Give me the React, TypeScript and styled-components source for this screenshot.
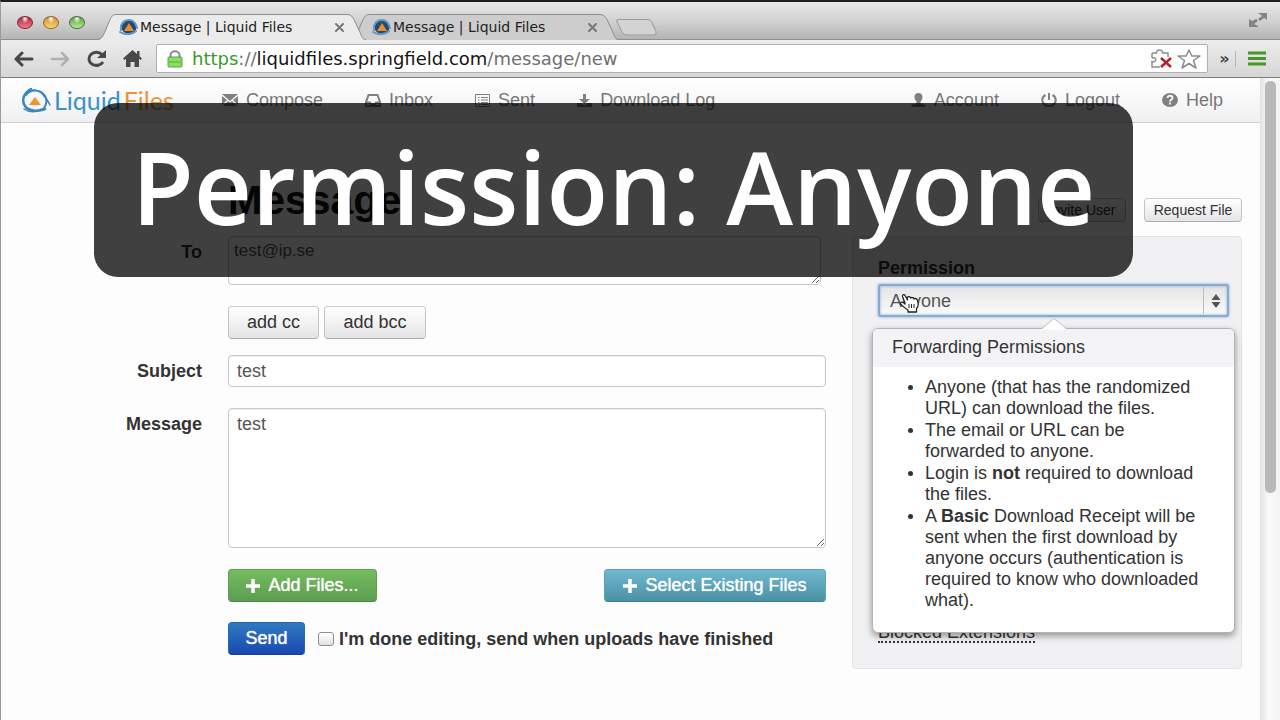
import React from "react";
import styled, { createGlobalStyle, css } from "styled-components";

const sans = `"Liberation Sans", Arial, sans-serif`;
const chromeFont = `"DejaVu Sans", "Noto Sans", sans-serif`;

const GlobalStyle = createGlobalStyle`
  *, *::before, *::after { box-sizing: border-box; }
  html, body { margin: 0; }
  body { background: #fdfdfd; color: #333; font: 18px/22px ${sans}; }
  button, input, textarea, select { font-family: inherit; font-size: inherit; color: inherit; margin: 0; }
  a { color: inherit; text-decoration: none; }
`;

/* ---------- Browser window ---------- */

const Window = styled.div`
  position: relative;
  display: flex;
  flex-direction: column;
  height: 100vh;
  overflow: hidden;
  border-top: 2px solid #231b24;
  border-left: 1px solid #9a9a9a;
`;

const TabStrip = styled.header`
  display: flex;
  align-items: flex-end;
  flex: none;
  height: 38px;
  padding: 0 12px 0 16px;
  background: linear-gradient(#e8e8e8, #d0d0d0 55%, #b4b4b4);
  border-bottom: 1px solid #8f8f8f;
`;

const Lights = styled.div`
  display: flex;
  gap: 10px;
  align-self: center;
  margin-top: 3px;
  width: 80px;
`;

const Light = styled.button<{ $from: string; $to: string; $edge: string }>`
  width: 16px;
  height: 13px;
  padding: 0;
  border: 1px solid ${(p) => p.$edge};
  border-radius: 50%;
  background: radial-gradient(ellipse at 50% 15%, #fff 0, transparent 35%),
    linear-gradient(${(p) => p.$from}, ${(p) => p.$to});
`;

const TabShell = styled.div<{ $active?: boolean }>`
  position: relative;
  z-index: ${(p) => (p.$active ? 2 : 1)};
  display: flex;
  align-items: center;
  width: 269px;
  height: 26px;
  margin-bottom: -1px;
  margin-right: -16px;
  padding: 0 22px;
  color: #222;
  font: 14px/18px ${chromeFont};
  svg { flex: none; }
`;

const TabShape = styled.svg`
  position: absolute;
  inset: 0;
  width: 100%;
  height: 100%;
`;

const TabIcon = styled.svg`
  position: relative;
`;

const TabTitle = styled.span`
  position: relative;
  flex: 1;
  margin-left: 1px;
  white-space: nowrap;
`;

const CloseTab = styled.button`
  position: relative;
  display: flex;
  padding: 0;
  border: 0;
  background: none;
`;

const NewTab = styled.button`
  padding: 0;
  border: 0;
  margin: 0 0 2px 12px;
  height: 19px;
  background: none;
  svg { display: block; }
`;

const FullScreen = styled.button`
  margin-left: auto;
  align-self: center;
  padding: 0;
  border: 0;
  background: none;
  height: 18px;
`;

const Toolbar = styled.div`
  display: flex;
  align-items: center;
  flex: none;
  height: 38px;
  padding: 0 12px;
  background: linear-gradient(#ececec, #d6d6d6);
  border-bottom: 1px solid #7c7c7c;
`;

const ToolButtons = styled.nav`
  display: flex;
  gap: 14px;
  width: 143px;
`;

const ToolButton = styled.button`
  display: flex;
  align-items: center;
  justify-content: center;
  width: 22px;
  height: 22px;
  padding: 0;
  border: 0;
  background: none;
  svg { flex: none; }
`;

const AddressBar = styled.div`
  display: flex;
  align-items: center;
  flex: 1;
  height: 29px;
  padding: 0 7px 0 10px;
  background: #fff;
  border: 1px solid #b0b0b0;
  border-radius: 2px;
  font: 18px/24px ${chromeFont};
  color: #707070;
  b { font-weight: 400; color: #141414; }
  i { font-style: normal; color: #3b9a29; }
`;

const AddressActions = styled.div`
  display: flex;
  gap: 6px;
`;

const Url = styled.span`
  flex: 1;
  margin-left: 9px;
  white-space: nowrap;
`;

const Chevrons = styled.button`
  width: 28px;
  margin-right: 10px;
  padding: 0 2px 0 8px;
  border: 0;
  border-right: 1px solid #b4b4b4;
  background: none;
  font: 700 16px/16px ${chromeFont};
  color: #444;
`;

/* ---------- Page viewport ---------- */

const Viewport = styled.div`
  display: flex;
  flex: 1;
  min-height: 0;
`;

const Page = styled.div`
  flex: 1;
  min-width: 0;
  overflow: hidden;
  background: #fdfdfd;
`;

const ScrollTrack = styled.div`
  width: 20px;
  padding: 3px 4px 0 4px;
  background: linear-gradient(90deg, #e6e6e8, #fafafa 40%, #f4f4f5);
  border-left: 1px solid #e2e2e2;
`;

const ScrollThumb = styled.div`
  height: 412px;
  border-radius: 5px;
  background: #b9b9bb;
`;

const NavBar = styled.nav`
  display: flex;
  align-items: center;
  height: 45px;
  padding: 0 37px 0 20px;
  background: linear-gradient(#fff, #f0f0f2);
  border-bottom: 1px solid #cfcfcf;
  color: #777;
`;

const Brand = styled.a`
  display: flex;
  align-items: center;
  width: 201px;
  color: #3a92c8;
  font: 25px/28px Lato, sans-serif;
  white-space: nowrap;
  span { margin-left: 3px; color: #e8963a; }
  svg { margin-right: 2px; }
`;

const NavGroup = styled.div<{ $end?: boolean }>`
  display: flex;
  gap: 42px;
  margin-left: ${(p) => (p.$end ? "auto" : "0")};
`;

const NavLink = styled.a`
  display: flex;
  align-items: center;
  gap: 8px;
  white-space: nowrap;
  line-height: 20px;
`;

const Content = styled.main`
  display: grid;
  grid-template-columns: minmax(0, 1fr) 390px;
  column-gap: 26px;
  padding: 58px 18px 0 20px;
`;

const FormColumn = styled.form`
  display: grid;
  grid-template-columns: 181px minmax(0, 1fr);
  column-gap: 26px;
  align-content: start;
`;

const Title = styled.h1`
  grid-column: 2;
  margin: 0 0 17px;
  color: #111;
  font: bold 41px/38px ${sans};
`;

const Label = styled.label`
  padding-top: 5px;
  text-align: right;
  font-weight: bold;
`;

const field = css`
  display: block;
  width: 100%;
  border: 1px solid #c8c8c8;
  border-radius: 4px;
  background: #fff;
  color: #555;
  line-height: 22px;
  box-shadow: inset 0 1px 1px rgba(0, 0, 0, 0.07);
`;

const Recipients = styled.textarea`
  ${field}
  && { font-size: 17px; }
  width: calc(100% - 5px);
  height: 49px;
  padding: 3px 5px;
  margin-bottom: 21px;
`;

const TextInput = styled.input`
  ${field}
  height: 32px;
  padding: 4px 8px;
  margin-bottom: 21px;
`;

const MessageBox = styled.textarea`
  ${field}
  height: 140px;
  padding: 4px 8px;
  margin-bottom: 21px;
`;

const Row = styled.div<{ $gap: number; $spread?: boolean; $bottom?: number }>`
  grid-column: 2;
  display: flex;
  align-items: center;
  justify-content: ${(p) => (p.$spread ? "space-between" : "flex-start")};
  gap: ${(p) => p.$gap}px;
  margin-bottom: ${(p) => p.$bottom ?? 0}px;
`;

const tones = {
  plain: css`
    color: #333;
    background: linear-gradient(#fff, #e4e4e6);
    border-color: #cccccc #c4c4c4 #aeaeae;
  `,
  green: css`
    color: #fff;
    background: linear-gradient(#74bd60, #5c9c50);
    border-color: #5fa050 #5fa050 #4f8745;
    text-shadow: 0 0 1px #fff;
  `,
  teal: css`
    color: #fff;
    background: linear-gradient(#70b9d0, #4a91a4);
    border-color: #5aa3b8 #5aa3b8 #41808f;
    text-shadow: 0 0 1px #fff;
  `,
  blue: css`
    color: #fff;
    background: linear-gradient(#2f7abf, #1a48b4);
    border-color: #2a68b0 #2a68b0 #1a3f98;
    text-shadow: 0 0 1px #fff;
  `,
};

const Button = styled.button<{ $tone: keyof typeof tones; $width: number; $small?: boolean }>`
  display: flex;
  align-items: center;
  justify-content: center;
  gap: 8px;
  width: ${(p) => p.$width}px;
  height: ${(p) => (p.$small ? 24 : 33)}px;
  padding: 0;
  border: 1px solid;
  border-radius: 4px;
  font-size: ${(p) => (p.$small ? 14 : 18)}px;
  white-space: nowrap;
  ${(p) => tones[p.$tone]}
`;

const DoneLabel = styled.label`
  display: flex;
  align-items: center;
  gap: 5px;
  font-weight: bold;
  white-space: nowrap;
`;

const Tick = styled.input`
  appearance: none;
  width: 16px;
  height: 14px;
  border: 1px solid #8e8e8e;
  border-radius: 3px;
  background: linear-gradient(#fff, #e2e2e2);
`;

const Side = styled.aside`
  display: flex;
  flex-direction: column;
`;

const SideActions = styled.div`
  display: flex;
  justify-content: flex-end;
  gap: 18px;
  padding: 17px 0 14px;
`;

const Well = styled.section`
  display: flex;
  flex-direction: column;
  height: 433px;
  padding: 20px 12px 25px 25px;
  border: 1px solid #e3e3e4;
  border-radius: 4px;
  background: #f1f1f3;
`;

const WellLabel = styled.label`
  margin-bottom: 5px;
  font-weight: bold;
`;

const SelectWrap = styled.div`
  position: relative;
`;

const Select = styled.select`
  appearance: none;
  display: block;
  width: 100%;
  height: 33px;
  padding: 0 10px;
  border: 2px solid #86aad2;
  border-radius: 2px;
  outline: 0;
  color: #555;
  background: linear-gradient(#e4e4e6, #fbfbfb);
  box-shadow: 0 0 3px #86aad2, inset 0 0 3px #86aad2;
`;

const Stepper = styled.span`
  position: absolute;
  top: 3px;
  bottom: 3px;
  right: 2px;
  display: flex;
  align-items: center;
  justify-content: center;
  width: 24px;
  border-left: 1px solid #bdbdc0;
  pointer-events: none;
`;

const HandCursor = styled.svg`
  position: absolute;
  left: 21px;
  top: 9px;
`;

const Popover = styled.div`
  position: absolute;
  z-index: 3;
  top: 44px;
  left: -6px;
  right: -6px;
  padding-bottom: 21px;
  border: 1px solid #b4b4b6;
  border-radius: 6px;
  background: #fff;
  box-shadow: 0 3px 7px rgba(0, 0, 0, 0.4);
`;

const PopoverArrow = styled.svg`
  position: absolute;
  top: -11px;
  left: 50%;
  margin-left: -13px;
`;

const PopoverTitle = styled.h3`
  margin: 0;
  padding: 7px 19px 9px;
  border-radius: 5px 5px 0 0;
  background: #f3f3f5;
  font: 18px/22px ${sans};
`;

const Rules = styled.ul`
  margin: 10px 0 0;
  padding: 0 26px 0 52px;
  line-height: 21px;
  li + li { margin-top: 1px; }
  li::marker { font-size: 17px; }
`;

const BlockedLink = styled.a`
  align-self: flex-start;
  margin-top: auto;
  line-height: 17px;
  border-bottom: 2px dotted #333;
`;

const Caption = styled.div`
  position: absolute;
  z-index: 5;
  top: 101px;
  left: 93px;
  right: 147px;
  height: 174px;
  padding-top: 24px;
  border-radius: 24px;
  background: rgba(0, 0, 0, 0.75);
  color: #fff;
  text-align: center;
  font: 600 101px/118px "Open Sans", sans-serif;
  white-space: nowrap;
`;

/* ---------- Icons ---------- */

const TabLogo = () => (
  <TabIcon width="20" height="16" viewBox="0 0 20 16">
    <ellipse cx="10" cy="8" rx="7.500" ry="7" fill="#27496e" />
    <path d="M2 11C1 5 5 1 10 1s7 4 8 8M1 13c5 3 12 3 16-1" fill="none" stroke="#5a9bcb" strokeWidth="2" strokeLinecap="round" />
    <path d="M10 4l5 8H5z" fill="#f08c28" />
  </TabIcon>
);

const BrandLogo = () => (
  <svg width="31" height="25" viewBox="0 0 31 25" fill="none" stroke="#3a86bd" strokeLinecap="round">
    <path d="M10 1C3 5 0 12 4 18c3 5 13 6 20 3" strokeWidth="2.500" />
    <path d="M5 7c5-6 15-6 19 1 3 5 1 9-1 12" strokeWidth="2" />
    <path d="M12 2c7 0 11 4 17 15" strokeWidth="1.500" />
    <path d="M3 21c6 4 13 3 18 0" strokeWidth="1.500" />
    <path d="M14 9l6 8H8z" fill="#f0932f" stroke="none" />
  </svg>
);

const Cross = () => (
  <svg width="9" height="9" viewBox="0 0 9 9" stroke="#777" strokeWidth="2" strokeLinecap="round">
    <path d="M1 1l7 7M8 1L1 8" />
  </svg>
);

const Arrow = ({ back = false }: { back?: boolean }) => (
  <svg width="20" height="16" viewBox="0 0 20 16" fill="none" stroke={back ? "#484848" : "#b0b0b0"} strokeWidth={back ? 3 : 2.5} strokeLinecap="round" strokeLinejoin="round">
    {back ? <path d="M18 8H2M8 2L2 8l6 6" /> : <path d="M2 8h16M12 2l6 6-6 6" />}
  </svg>
);

const Tab = ({ active }: { active?: boolean }) => (
  <TabShell $active={active}>
    <TabShape viewBox="0 0 269 26" preserveAspectRatio="none">
      <path d="M0 26c5 0 6-4 8-8l5-12c2-4 3-5.500 7-5.500h230c4 0 5 2 7 5.500l6 13c2 4 2 7 6 7z" fill={active ? "#ebebeb" : "#cdcdcd"} />
      <path d="M0 25.500c5 0 6-4 8-8l5-12c2-4 3-5 7-5h230c4 0 5 2 7 5l6 13c2 4 2 7 6 7" fill="none" stroke="#8f8f8f" />
    </TabShape>
    <TabLogo />
    <TabTitle>Message | Liquid Files</TabTitle>
    <CloseTab aria-label="Close tab"><Cross /></CloseTab>
  </TabShell>
);

const Plus = () => (
  <svg width="14" height="14" viewBox="0 0 14 14" stroke="#fff" strokeWidth="3.500">
    <path d="M7 0v14M0 7h14" />
  </svg>
);

export default function App() {
  return (
    <Window>
      <GlobalStyle />
      <TabStrip>
        <Lights>
          <Light aria-label="Close" $from="#b0283c" $to="#f07a88" $edge="#7d2432" />
          <Light aria-label="Minimise" $from="#cf8a2c" $to="#f8d878" $edge="#8a6426" />
          <Light aria-label="Zoom" $from="#5c9c48" $to="#b4ec94" $edge="#43703a" />
        </Lights>
        <Tab active />
        <Tab />
        <NewTab aria-label="New tab">
          <svg width="44" height="19" viewBox="0 0 44 19">
            <path d="M3 1.500h30q3 0 4 3l4 9q1 3-2 3.500H12q-4 0-5-3L2 4Q1 1.500 3 1.500z" fill="#d3d3d3" stroke="#9a9a9a" />
          </svg>
        </NewTab>
        <FullScreen aria-label="Full screen">
          <svg width="20" height="16" viewBox="0 0 20 16" fill="#858585">
            <path d="M10 1h9v7l-3-2-4 3-2-2 4-3zM1 7l3 2 4-2 2 2-4 3 4 2v1H1z" />
          </svg>
        </FullScreen>
      </TabStrip>

      <Toolbar>
        <ToolButtons>
          <ToolButton aria-label="Back"><Arrow back /></ToolButton>
          <ToolButton aria-label="Forward"><Arrow /></ToolButton>
          <ToolButton aria-label="Reload">
            <svg width="21" height="18" viewBox="0 0 21 18">
              <path d="M16 4.500A7.500 6.500 0 1 0 17 12" fill="none" stroke="#484848" strokeWidth="3" />
              <path d="M20 0v8h-9z" fill="#484848" />
            </svg>
          </ToolButton>
          <ToolButton aria-label="Home">
            <svg width="19" height="17" viewBox="0 0 19 17" fill="#484848">
              <path d="M9.500 0L0 8.500l1.500 1.500L3 8.700V17h4.500v-5h4v5H16V8.700l1.500 1.300L19 8.500l-2.500-2.300V1H14v3z" />
            </svg>
          </ToolButton>
        </ToolButtons>
        <AddressBar>
          <svg width="16" height="18" viewBox="0 0 16 18">
            <path d="M3.500 8V5c0-5 9-5 9 0v3" fill="none" stroke="#8c8c8c" strokeWidth="2" />
            <rect x="1" y="7" width="14" height="10" rx="1" fill="#8bdc62" stroke="#58a53c" />
            <path d="M2 12h12" stroke="#6cc648" strokeWidth="2" />
          </svg>
          <Url><i>https</i>://<b>liquidfiles.springfield.com</b>/message/new</Url>
          <AddressActions>
            <ToolButton aria-label="Plug-in blocked">
              <svg width="22" height="20" viewBox="0 0 22 20" fill="none">
                <path d="M2 4h4.500c-1-4 7-4 6 0H18v4M2 4v5M2 9c5-2 5 5 0 3.500V18h8" stroke="#8f8f8f" strokeWidth="1.500" />
                <path d="M11 9l10 9M21 9l-10 9" stroke="#b4202c" strokeWidth="2.500" />
              </svg>
            </ToolButton>
            <ToolButton aria-label="Bookmark">
              <svg width="24" height="20" viewBox="0 0 24 20" fill="#fff" stroke="#8c8c8c" strokeWidth="1.500" strokeLinejoin="round">
                <path d="M12 1l2.800 6H23l-6.500 4.500L19 19l-7-4.500L5 19l2.500-7.500L1 7h8.200z" />
              </svg>
            </ToolButton>
          </AddressActions>
        </AddressBar>
        <Chevrons aria-label="More extensions">»</Chevrons>
        <ToolButton aria-label="Menu">
          <svg width="18" height="15" viewBox="0 0 18 15" stroke="#4a9528" strokeWidth="3">
            <path d="M0 2h18M0 7.500h18M0 13h18" />
          </svg>
        </ToolButton>
      </Toolbar>

      <Viewport>
        <Page>
          <NavBar>
            <Brand href="#"><BrandLogo />Liquid<span>Files</span></Brand>
            <NavGroup>
              <NavLink href="#">
                <svg width="16" height="12" viewBox="0 0 16 12"><path d="M0 0h16L8 7zM0 2l5 4-5 5zM16 2v9l-5-5zM1 12l5-5 2 1.500L10 7l5 5z" fill="#808080" /></svg>
                Compose
              </NavLink>
              <NavLink href="#">
                <svg width="16" height="13" viewBox="0 0 16 13" fill="none" stroke="#808080" strokeWidth="2"><path d="M3.500 1h9L15 8v4H1V8zM1 8.500h4l1 2h4l1-2h4" /></svg>
                Inbox
              </NavLink>
              <NavLink href="#">
                <svg width="15" height="13" viewBox="0 0 15 13" fill="none" stroke="#808080"><path d="M.5.5h14v12H.5zM3 3.500h1.500M6 3.500h7M3 6h1.500M6 6h7M3 8.500h1.500M6 8.500h7M3 10.500h1.500M6 10.500h7" /></svg>
                Sent
              </NavLink>
              <NavLink href="#">
                <svg width="15" height="13" viewBox="0 0 15 13" fill="#808080"><path d="M6 0h3v5h4L7.500 10 2 5h4zM0 9h4l3.500 2.500L11 9h4v4H0z" /></svg>
                Download Log
              </NavLink>
            </NavGroup>
            <NavGroup $end>
              <NavLink href="#">
                <svg width="15" height="14" viewBox="0 0 15 14" fill="#808080"><path d="M7.500 0C10 0 11.500 1.500 11.500 4c0 2-1 4-2 4.500V10l5 2v2H.5v-2l5-2V8.500c-1-.5-2-2.500-2-4.500C3.500 1.500 5 0 7.500 0z" /></svg>
                Account
              </NavLink>
              <NavLink href="#">
                <svg width="16" height="14" viewBox="0 0 16 14" fill="none" stroke="#808080" strokeWidth="2"><path d="M4.500 2C-1 5 1 13 8 13s9-8 3.500-11M8 0v7" /></svg>
                Logout
              </NavLink>
              <NavLink href="#">
                <svg width="16" height="14" viewBox="0 0 16 14"><ellipse cx="8" cy="7" rx="8" ry="7" fill="#808080" /><path d="M5.500 5c0-3 5-3 5 0 0 1.500-2.500 1.500-2.500 3.500M8 9.500V11.500" fill="none" stroke="#f8f8f8" strokeWidth="1.800" /></svg>
                Help
              </NavLink>
            </NavGroup>
          </NavBar>

          <Content>
            <FormColumn onSubmit={(e) => e.preventDefault()}>
              <Title>Message</Title>
              <Label htmlFor="to">To</Label>
              <Recipients id="to" defaultValue="test@ip.se" />
              <Row $gap={5} $bottom={16}>
                <Button type="button" $tone="plain" $width={91}>add cc</Button>
                <Button type="button" $tone="plain" $width={102}>add bcc</Button>
              </Row>
              <Label htmlFor="subject">Subject</Label>
              <TextInput id="subject" defaultValue="test" />
              <Label htmlFor="message">Message</Label>
              <MessageBox id="message" defaultValue="test" />
              <Row $gap={0} $spread $bottom={20}>
                <Button type="button" $tone="green" $width={149}><Plus />Add Files...</Button>
                <Button type="button" $tone="teal" $width={222}><Plus />Select Existing Files</Button>
              </Row>
              <Row $gap={13}>
                <Button type="submit" $tone="blue" $width={77}>Send</Button>
                <DoneLabel>
                  <Tick type="checkbox" />
                  I'm done editing, send when uploads have finished
                </DoneLabel>
              </Row>
            </FormColumn>

            <Side>
              <SideActions>
                <Button type="button" $tone="plain" $width={88} $small>Invite User</Button>
                <Button type="button" $tone="plain" $width={98} $small>Request File</Button>
              </SideActions>
              <Well>
                <WellLabel htmlFor="permission">Permission</WellLabel>
                <SelectWrap>
                  <Select id="permission" defaultValue="Anyone">
                    <option>Anyone</option>
                  </Select>
                  <Stepper>
                    <svg width="10" height="14" viewBox="0 0 10 14" fill="#555"><path d="M5 0l4.500 6h-9zM5 14L.5 8h9z" /></svg>
                  </Stepper>
                  <HandCursor width="21" height="20" viewBox="0 0 21 20" fill="#fff" stroke="#222" strokeWidth="1.300" strokeLinejoin="round">
                    <path d="M6 10L3.500 3.500C3 1.500 5.500 1 6 2.500L8.500 7 8 4.500c1-1.500 3-1 3.500.5 1-1 3-.5 3.500 1 1.500-1 3-.5 3.500 1.500 1 3 1 6-1 8v3.500H9V17C6 15 3 13 1.500 10.500 1 8.500 4 8.500 6 11z" />
                    <path d="M10 11v4M12.500 11v4M15 11v4" strokeWidth="1" />
                  </HandCursor>
                  <Popover role="tooltip">
                    <PopoverArrow width="26" height="12" viewBox="0 0 26 12">
                      <path d="M0 12L13 1l13 11z" fill="#fff" />
                      <path d="M0 11L13 .5 26 11" fill="none" stroke="#c4c4c6" />
                    </PopoverArrow>
                    <PopoverTitle>Forwarding Permissions</PopoverTitle>
                    <Rules>
                      <li>Anyone (that has the randomized URL) can download the files.</li>
                      <li>The email or URL can be forwarded to anyone.</li>
                      <li>Login is <b>not</b> required to download the files.</li>
                      <li>A <b>Basic</b> Download Receipt will be sent when the first download by anyone occurs (authentication is required to know who downloaded what).</li>
                    </Rules>
                  </Popover>
                </SelectWrap>
                <BlockedLink href="#">Blocked Extensions</BlockedLink>
              </Well>
            </Side>
          </Content>
        </Page>
        <ScrollTrack><ScrollThumb /></ScrollTrack>
      </Viewport>

      <Caption>Permission: Anyone</Caption>
    </Window>
  );
}
